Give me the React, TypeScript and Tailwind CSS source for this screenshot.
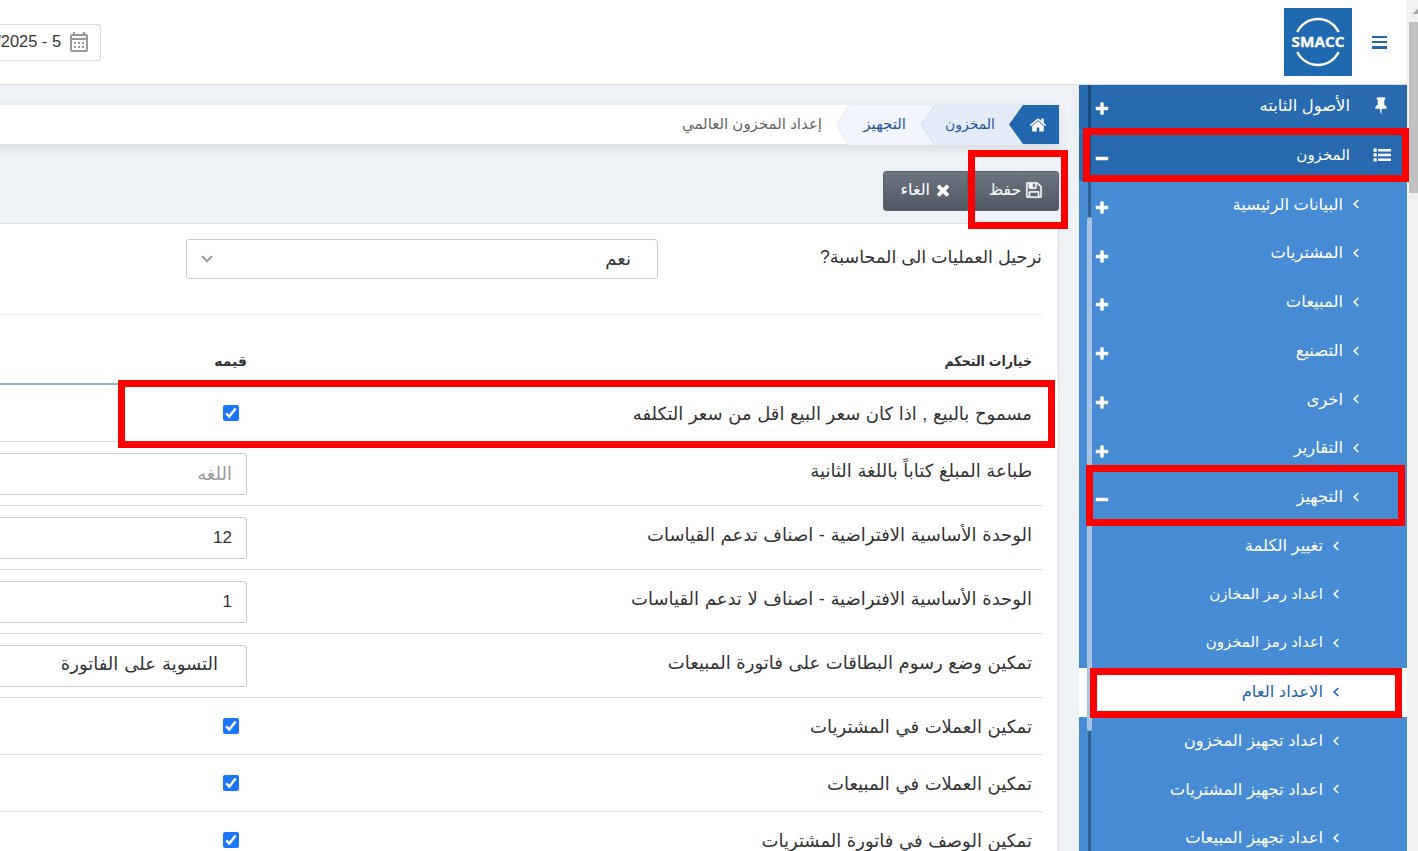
import type { ReactNode } from "react";
import clsx from "clsx";

const ICONS = {
  plus: "M1600 736v192q0 40-28 68t-68 28h-416v416q0 40-28 68t-68 28h-192q-40 0-68-28t-28-68v-416h-416q-40 0-68-28t-28-68v-192q0-40 28-68t68-28h416v-416q0-40 28-68t68-28h192q40 0 68 28t28 68v416h416q40 0 68 28t28 68z",
  minus: "M1600 736v192q0 40-28 68t-68 28h-1216q-40 0-68-28t-28-68v-192q0-40 28-68t68-28h1216q40 0 68 28t28 68z",
  home: "M1472 992v480q0 26-19 45t-45 19h-384v-384h-256v384h-384q-26 0-45-19t-19-45v-480q0-1 .5-3t.5-3l575-474 575 474q1 2 1 6zm223-69l-62 74q-8 9-21 11h-3q-13 0-21-7l-692-577-692 577q-12 8-24 7-13-2-21-11l-62-74q-8-10-7-23.5t11-21.5l719-599q32-26 76-26t76 26l244 204v-195q0-14 9-23t23-9h192q14 0 23 9t9 23v408l219 182q10 8 11 21.5t-7 23.5z",
  save: "M512 1536h768v-384h-768v384zm896 0h128v-896q0-14-10-38.5t-20-34.5l-281-281q-10-10-34-20t-39-10v416q0 40-28 68t-68 28h-576q-40 0-68-28t-28-68v-416h-128v1280h128v-416q0-40 28-68t68-28h832q40 0 68 28t28 68v416zm-384-928v-320q0-13-9.5-22.5t-22.5-9.5h-192q-13 0-22.5 9.5t-9.5 22.5v320q0 13 9.5 22.5t22.5 9.5h192q13 0 22.5-9.5t9.5-22.5zm640 32v928q0 40-28 68t-68 28h-1344q-40 0-68-28t-28-68v-1344q0-40 28-68t68-28h928q40 0 88 20t76 48l280 280q28 28 48 76t20 88z",
  times: "M1490 1322q0 40-28 68l-136 136q-28 28-68 28t-68-28l-294-294-294 294q-28 28-68 28t-68-28l-136-136q-28-28-28-68t28-68l294-294-294-294q-28-28-28-68t28-68l136-136q28-28 68-28t68 28l294 294 294-294q28-28 68-28t68 28l136 136q28 28 28 68t-28 68l-294 294 294 294q28 28 28 68z",
  pin: "M1472 1216q0 26-19 45t-45 19h-429l-51 483q-2 12-10.5 20.5t-20.5 8.5h-1q-27 0-32-27l-76-485h-404q-26 0-45-19t-19-45q0-123 78.5-221.5t177.5-98.5v-512q-52 0-90-38t-38-90 38-90 90-38h640q52 0 90 38t38 90-38 90-90 38v512q99 0 177.5 98.5t78.5 221.5z",
};

function Icon({ name, className }: { name: keyof typeof ICONS; className?: string }) {
  return (
    <svg viewBox="0 0 1792 1792" fill="currentColor" className={clsx("shrink-0", className)}>
      <path d={ICONS[name]} />
    </svg>
  );
}

const SUB_ITEMS = [
  "البيانات الرئيسية",
  "المشتريات",
  "المبيعات",
  "التصنيع",
  "اخرى",
  "التقارير",
];

const SETUP_ITEMS = [
  { label: "تغيير الكلمة" },
  { label: "اعداد رمز المخازن", tight: true },
  { label: "اعداد رمز المخزون", tight: true },
  { label: "الاعداد العام", active: true },
  { label: "اعداد تجهيز المخزون" },
  { label: "اعداد تجهيز المشتريات" },
  { label: "اعداد تجهيز المبيعات" },
];

type Row = { label: string; kind: "check" | "input" | "select"; value?: string; placeholder?: string };

const ROWS: Row[] = [
  { label: "مسموح بالبيع , اذا كان سعر البيع اقل من سعر التكلفه", kind: "check" },
  { label: "طباعة المبلغ كتاباً باللغة الثانية", kind: "input", placeholder: "اللغه" },
  { label: "الوحدة الأساسية الافتراضية - اصناف تدعم القياسات", kind: "input", value: "12" },
  { label: "الوحدة الأساسية الافتراضية - اصناف لا تدعم القياسات", kind: "input", value: "1" },
  { label: "تمكين وضع رسوم البطاقات على فاتورة المبيعات", kind: "select", value: "التسوية على الفاتورة" },
  { label: "تمكين العملات في المشتريات", kind: "check" },
  { label: "تمكين العملات في المبيعات", kind: "check" },
  { label: "تمكين الوصف في فاتورة المشتريات", kind: "check" },
];

function Logo() {
  return (
    <svg viewBox="0 0 68 68" className="size-[68px] shrink-0">
      <rect width="68" height="68" fill="#1e69b0" />
      <path d="M13.3 24A23 23 0 0 1 54.7 24M13.3 44A23 23 0 0 0 54.7 44" fill="none" stroke="#fff" strokeWidth="2.4" />
      <text
        x="34"
        y="39"
        textAnchor="middle"
        textLength="53"
        lengthAdjust="spacingAndGlyphs"
        direction="ltr"
        fill="#fff"
        stroke="#fff"
        strokeWidth="0.3"
        className="font-['Open_Sans',sans-serif] text-[14.5px] font-bold"
      >
        SMACC
      </text>
    </svg>
  );
}

function CalendarIcon() {
  return (
    <svg viewBox="0 0 18 20" fill="#999" className="mb-0.5 h-5 w-[18px] shrink-0">
      <path
        fillRule="evenodd"
        d="M3 0h2v2h8V0h2v2h1a2 2 0 0 1 2 2v14a2 2 0 0 1-2 2H2a2 2 0 0 1-2-2V4a2 2 0 0 1 2-2h1zM2 4v2h14V4zM2 8v10h14V8z"
      />
      <path d="M4 10h2v2H4zM8 10h2v2H8zM12 10h2v2h-2zM4 14h2v2H4zM8 14h2v2H8zM12 14h2v2h-2z" />
    </svg>
  );
}

function Header() {
  return (
    <header className="flex h-[85px] shrink-0 justify-between border-b border-[#ddd] bg-white">
      <div className="flex pt-2 pr-5">
        <div className="mt-[28px] flex h-[13px] w-[15px] flex-col justify-between">
          <span className="h-0.5 bg-[#2166ae]" />
          <span className="h-0.5 bg-[#2166ae]" />
          <span className="h-[3px] bg-[#2166ae]" />
        </div>
        <div className="mr-5">
          <Logo />
        </div>
      </div>
      <div className="mt-6 flex h-[37px] w-[101px] items-center justify-start overflow-hidden rounded-r-[3px] border border-l-0 border-[#ddd] pr-3">
        <CalendarIcon />
        <span dir="ltr" className="mr-[9px] flex w-[61px] shrink-0 justify-end pb-0.5 text-[16.4px] whitespace-nowrap text-[#333]">
          /2025 - 5
        </span>
      </div>
    </header>
  );
}

function Angle() {
  return (
    <svg viewBox="0 0 8 10" className="mb-px h-2.5 w-2 shrink-0" fill="none" stroke="currentColor" strokeWidth="1.7">
      <path d="M6.3 1L2.2 5l4.1 4" />
    </svg>
  );
}

interface MenuItemProps {
  label: string;
  nested?: boolean;
  active?: boolean;
  tight?: boolean;
  toggle?: "plus" | "minus";
}

function MenuItem({ label, nested, active, tight, toggle }: MenuItemProps) {
  return (
    <li
      className={clsx(
        "flex h-[48.75px] items-center pl-[15px]",
        nested ? "pr-[67px]" : "pr-[47px]",
        active ? "bg-white text-[#2166ae]" : "text-white",
      )}
    >
      <Angle />
      <span className={clsx("mr-[9px] mb-0.5 whitespace-nowrap", tight && "text-[15px]")}>{label}</span>
      {toggle && <Icon name={toggle} className="mt-1.5 mr-auto size-4" />}
    </li>
  );
}

function Sidebar() {
  return (
    <nav className="relative w-[328px] shrink-0 overflow-hidden bg-[#468bd4] text-[16.4px]">
      <div className="flex h-[47px] items-center border-b border-[#4286cb] bg-[#276ab0] pr-4 pb-1.5 pl-[15px] text-white">
        <Icon name="pin" className="mr-px size-[18px]" />
        <span className="mr-[22px]">الأصول الثابته</span>
        <Icon name="plus" className="mt-2 mr-auto size-4" />
      </div>
      <div className="flex h-[49px] items-center bg-[#276ab0] pr-4 pb-0.5 pl-[15px] text-white">
        <svg viewBox="0 0 18 14" className="mb-0.5 h-3.5 w-[18px] shrink-0" fill="currentColor">
          <path d="M5 1h13v2.5H5zM5 5.7h13v2.5H5zM5 10.5h13V13H5z" />
          <path d="M.5.5h3.200v3.200H.5zM.5 5.300h3.200v3.200H.5zM.5 10.200h3.200v3.200H.5z" />
        </svg>
        <span className="mr-[23px] text-[15px]">المخزون</span>
        <Icon name="minus" className="mt-1.5 mr-auto size-4" />
      </div>
      <ul className="-mt-[0.5px]">
        {SUB_ITEMS.map((label) => (
          <MenuItem key={label} label={label} toggle="plus" />
        ))}
        <MenuItem label="التجهيز" toggle="minus" />
        {SETUP_ITEMS.map((item) => (
          <MenuItem key={item.label} nested {...item} />
        ))}
      </ul>
      {/* scroll rail */}
      <div className="absolute inset-y-0 left-[9px] w-[3px] bg-black/30" />
      <div className="absolute top-[132px] left-2 h-[514px] w-[5px] rounded-sm bg-[#a9c3e3]" />
    </nav>
  );
}

function Breadcrumb() {
  return (
    <div className="mt-5 flex h-[39px] w-[1079px] bg-white text-[15px] shadow-[0_4px_10px_rgba(0,0,0,0.1)]">
      <div className="z-20 flex w-[50px] items-center bg-[#2166ae] pr-3 text-white [clip-path:polygon(100%_0,28%_0,0_50%,28%_100%,100%_100%)]">
        <Icon name="home" className="size-[18px]" />
      </div>
      <div className="z-10 -mr-[14px] h-10 w-[102px] bg-[#c9dbf3] [clip-path:polygon(100%_0,13%_0,0_50%,13%_100%,100%_100%)]">
        <div className="flex h-full items-center bg-[#e4ecf8] pr-[28px] pb-0.5 text-sm text-[#1f57a0] [clip-path:polygon(100%_0,14%_0,1px_50%,14%_100%,100%_100%)]">
          المخزون
        </div>
      </div>
      <div className="-mr-[14px] h-10 w-[99px] bg-[#e1e9f5] [clip-path:polygon(100%_0,13%_0,0_50%,13%_100%,100%_100%)]">
        <div className="flex h-full items-center bg-[#f2f6fc] pr-[29px] pb-0.5 text-[#1f57a0] [clip-path:polygon(100%_0,14%_0,1px_50%,14%_100%,100%_100%)]">
          التجهيز
        </div>
      </div>
      <span className="mr-[14px] pt-2 text-[#666]">إعداد المخزون العالمي</span>
    </div>
  );
}

function ToolButton({ className, children }: { className?: string; children: ReactNode }) {
  return (
    <button
      className={clsx(
        "flex h-10 items-center border border-[#59626c] bg-gradient-to-b from-[#6c7681] to-[#505963] pb-0.5 text-base text-white",
        className,
      )}
    >
      {children}
    </button>
  );
}

function Checkbox() {
  return (
    <svg viewBox="0 0 16 16" className="mt-5 mr-2 size-4 shrink-0">
      <rect width="16" height="16" rx="2" fill="#1a75ff" />
      <path d="M3.2 8.4l3.1 3.2 6.3-8" fill="none" stroke="#fff" strokeWidth="2.5" />
    </svg>
  );
}

function ValueCell({ row }: { row: Row }) {
  if (row.kind === "check") return <Checkbox />;
  const numeric = row.kind === "input" && row.value;
  return (
    <div
      className={clsx(
        "mt-[11px] flex h-[42px] w-[247px] items-center rounded-r-[3px] border border-l-0 border-[#ccc] bg-white",
        row.kind === "select" ? "pr-7 pb-1" : "pr-3.5",
        row.placeholder ? "text-[#999]" : "text-[#333]",
        numeric ? "text-[17px]" : "text-lg [word-spacing:1px]",
      )}
    >
      {row.value ?? row.placeholder}
    </div>
  );
}

function OptionsTable() {
  return (
    <div className="mr-4">
      <div className="flex h-[70px] border-b-2 border-[#8db4d8] pt-9 pr-2.5 text-sm font-bold text-[#333]">
        <span className="w-[785px] font-['Liberation_Sans','DejaVu_Sans_Condensed',sans-serif]">خيارات التحكم</span>
        <span>قيمه</span>
      </div>
      {ROWS.map((row) => (
        <div
          key={row.label}
          className={clsx("flex border-b border-[#ddd] pr-2.5 text-[#333]", row.kind === "check" ? "h-[57px]" : "h-16")}
        >
          <span className="w-[785px] shrink-0 pt-4 text-lg/[26px] whitespace-nowrap [word-spacing:0.6px]">{row.label}</span>
          <ValueCell row={row} />
        </div>
      ))}
    </div>
  );
}

function Content() {
  return (
    <main className="flex h-full w-[1079px] flex-col overflow-hidden bg-[#eef1f6] pr-5">
      <Breadcrumb />
      <div className="mt-[27px] flex h-10">
        <ToolButton className="w-[91px] rounded-r-[3px] pr-[15px]">
          <Icon name="save" className="size-[18px] stroke-current [stroke-width:40]" />
          <span className="mr-1 text-[15.5px]">حفظ</span>
        </ToolButton>
        <ToolButton className="w-[85px] rounded-l-[3px] pr-[15px]">
          <Icon name="times" className="size-[18px]" />
          <span className="mr-1">الغاء</span>
        </ToolButton>
      </div>
      <section className="mt-3 flex-1 border-t border-r border-[#ddd] bg-white">
        <div className="mr-4 flex h-[91px] border-b border-[#eee] pt-[15px] text-lg/[26px] text-[#333]">
          <span className="w-[384px] pt-[5px] text-[17.6px]">نرحيل العمليات الى المحاسبة?</span>
          <div className="flex h-10 w-[472px] items-center justify-between rounded-[3px] border border-[#ccc] pr-[26px] pl-3.5">
            <span>نعم</span>
            <svg viewBox="0 0 12 8" className="h-2 w-3" fill="none" stroke="#999" strokeWidth="2">
              <path d="M1 1.2l5 5 5-5" />
            </svg>
          </div>
        </div>
        <OptionsTable />
      </section>
    </main>
  );
}

function Highlight({ className }: { className: string }) {
  return <div className={clsx("absolute z-30 border-[7px] border-[#ff0000]", className)} />;
}

export default function App() {
  return (
    <div
      dir="rtl"
      className="relative flex h-[851px] w-[1418px] overflow-hidden bg-white font-['Liberation_Sans','DejaVu_Sans',sans-serif]"
    >
      <div className="flex w-[11px] shrink-0 flex-col items-end bg-[#f1f1f1]">
        <svg viewBox="0 0 11 22" className="h-[22px] w-[11px]">
          <path d="M5.5 14L11 8.5V14z" fill="#a3a3a3" />
        </svg>
        <div className="h-[171px] w-[9px] self-start bg-[#c1c1c1]" />
      </div>
      <div className="flex w-[1407px] flex-col">
        <Header />
        <div className="flex h-[766px]">
          <Sidebar />
          <Content />
        </div>
      </div>

      <Highlight className="top-[128px] left-[1083px] h-[54px] w-[326px]" />
      <Highlight className="top-[465px] left-[1086px] h-[61px] w-[319px]" />
      <Highlight className="top-[668px] left-[1090px] h-[50px] w-[312px]" />
      <Highlight className="top-[150px] left-[968px] h-[79px] w-[100px]" />
      <Highlight className="top-[380px] left-[118px] h-[68px] w-[937px]" />
    </div>
  );
}
